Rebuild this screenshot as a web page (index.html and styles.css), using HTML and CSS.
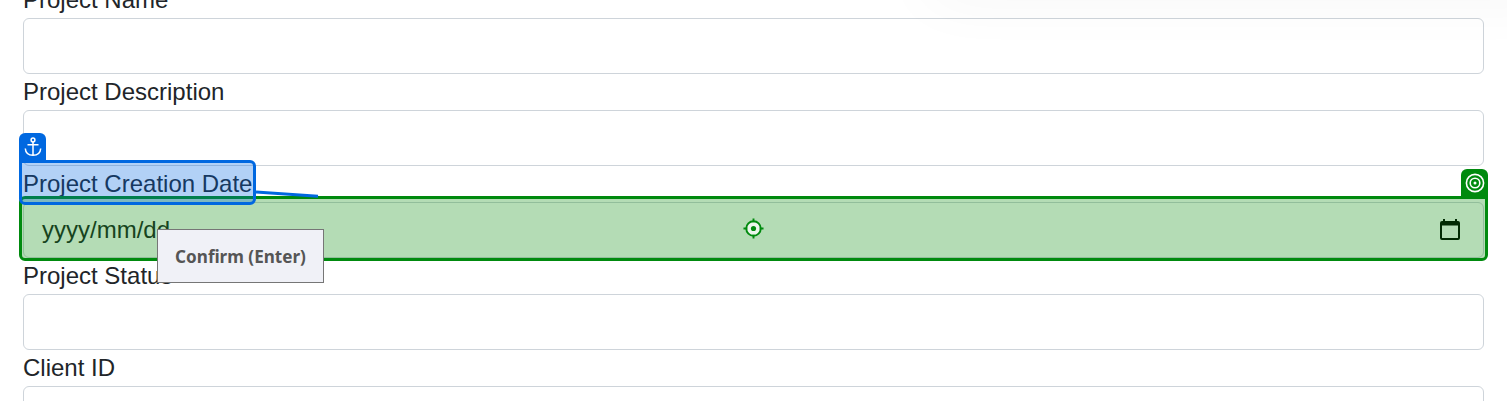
FILE: index.html
```html
<!DOCTYPE html>
<html lang="en">
<head>
<meta charset="utf-8">
<title>Project form</title>
<link rel="stylesheet" href="styles.css">
</head>
<body>
<form class="form">
  <label class="label">Project Name</label>
  <div class="field"></div>
  <label class="label">Project Description</label>
  <div class="field"></div>
  <label class="label">Project Creation Date</label>
  <div class="field date">
    <span>yyyy/mm/dd</span>
    <svg class="calendar" viewBox="0 0 24 24"><path fill="#000" fill-rule="evenodd" d="M5 1h2v2h10V1h2v2h1a2 2 0 0 1 2 2v15a2 2 0 0 1-2 2H4a2 2 0 0 1-2-2V5a2 2 0 0 1 2-2h1zM4 7.5v12.5h16V7.500z"/></svg>
  </div>
  <label class="label">Project Status</label>
  <div class="field"></div>
  <label class="label">Client ID</label>
  <div class="field"></div>
</form>
<div class="top-shadow"></div>
<div class="target">
  <span class="tag target-tag"><svg viewBox="0 0 20 20" fill="none" stroke="#fff" stroke-width="1.6"><circle cx="10" cy="10" r="8.6"/><circle cx="10" cy="10" r="4.8"/><circle cx="10" cy="10" r="1.5" fill="#fff" stroke="none"/></svg></span>
  <svg class="crosshair" viewBox="0 0 22 22"><circle cx="11" cy="11" r="7.6" fill="#fff" fill-opacity=".75" stroke="#008a0e" stroke-width="2"/><circle cx="11" cy="11" r="2.7" fill="#008a0e"/><path d="M11 .5v4M11 17.5v4M.5 11h4M17.500 11h4" stroke="#008a0e" stroke-width="2"/></svg>
</div>
<svg class="connector" viewBox="0 0 64 8"><path d="M0 2 62 6.200" stroke="#0068e0" stroke-width="3"/></svg>
<div class="anchor">
  <span class="tag anchor-tag"><svg viewBox="0 0 20 20" fill="none" stroke="#fff" stroke-width="1.500"><circle cx="10" cy="3" r="1.900"/><path d="M10 5v13.500M4.500 7.700h11M2.300 11.500c.3 4.400 3.300 6.700 7.700 6.700s7.400-2.300 7.700-6.700"/></svg></span>
</div>
<div class="tooltip">Confirm (Enter)</div>
</body>
</html>
```

FILE: styles.css
```css
* { box-sizing: border-box; }
body {
  margin: 0;
  height: 401px;
  overflow: hidden;
  position: relative;
  background: #fff;
  color: #212529;
  font: 24px/36px "Liberation Sans", Arial, sans-serif;
}
.form {
  display: flex;
  flex-direction: column;
  margin: -18px 23px 0;
}
.label { height: 36px; }
.field {
  height: 56px;
  border: 1px solid #ced4da;
  border-radius: 6px;
}
.date {
  display: flex;
  align-items: center;
  justify-content: space-between;
  padding: 0 21px 0 18px;
}
.calendar { width: 24px; height: 24px; }
.top-shadow {
  position: absolute;
  left: 930px;
  right: -60px;
  top: -50px;
  height: 40px;
  box-shadow: 0 4px 64px rgba(0, 0, 0, .055);
}
.target, .anchor {
  position: absolute;
  left: 19px;
}
.target {
  top: 196px;
  width: 1469px;
  height: 65px;
  border: 3px solid #008a0e;
  border-radius: 6px 0 6px 6px;
  background: rgba(5, 140, 10, .3);
}
.anchor {
  top: 160px;
  width: 237px;
  height: 45px;
  border: 3px solid #0068e0;
  border-radius: 0 6px 6px 6px;
  background: rgba(0, 104, 224, .3);
}
.tag {
  position: absolute;
  top: -30px;
  width: 27px;
  height: 28px;
  display: flex;
  justify-content: center;
  padding-top: 4px;
  border-radius: 6px 6px 0 0;
}
.tag svg { width: 20px; height: 20px; }
.target-tag { right: -3px; background: #008a0e; }
.anchor-tag { left: -3px; background: #0068e0; }
.crosshair {
  position: absolute;
  left: 721px;
  top: 19px;
  width: 21px;
  height: 21px;
}
.connector {
  position: absolute;
  left: 256px;
  top: 190px;
  width: 64px;
  height: 8px;
}
.tooltip {
  position: absolute;
  left: 157px;
  top: 229px;
  width: 167px;
  height: 54px;
  border: 1px solid #767676;
  background: #f0f1f7;
  color: #555;
  font: bold 17.1px/53px "Noto Sans", "Open Sans", sans-serif;
  text-align: center;
  white-space: nowrap;
}
```
